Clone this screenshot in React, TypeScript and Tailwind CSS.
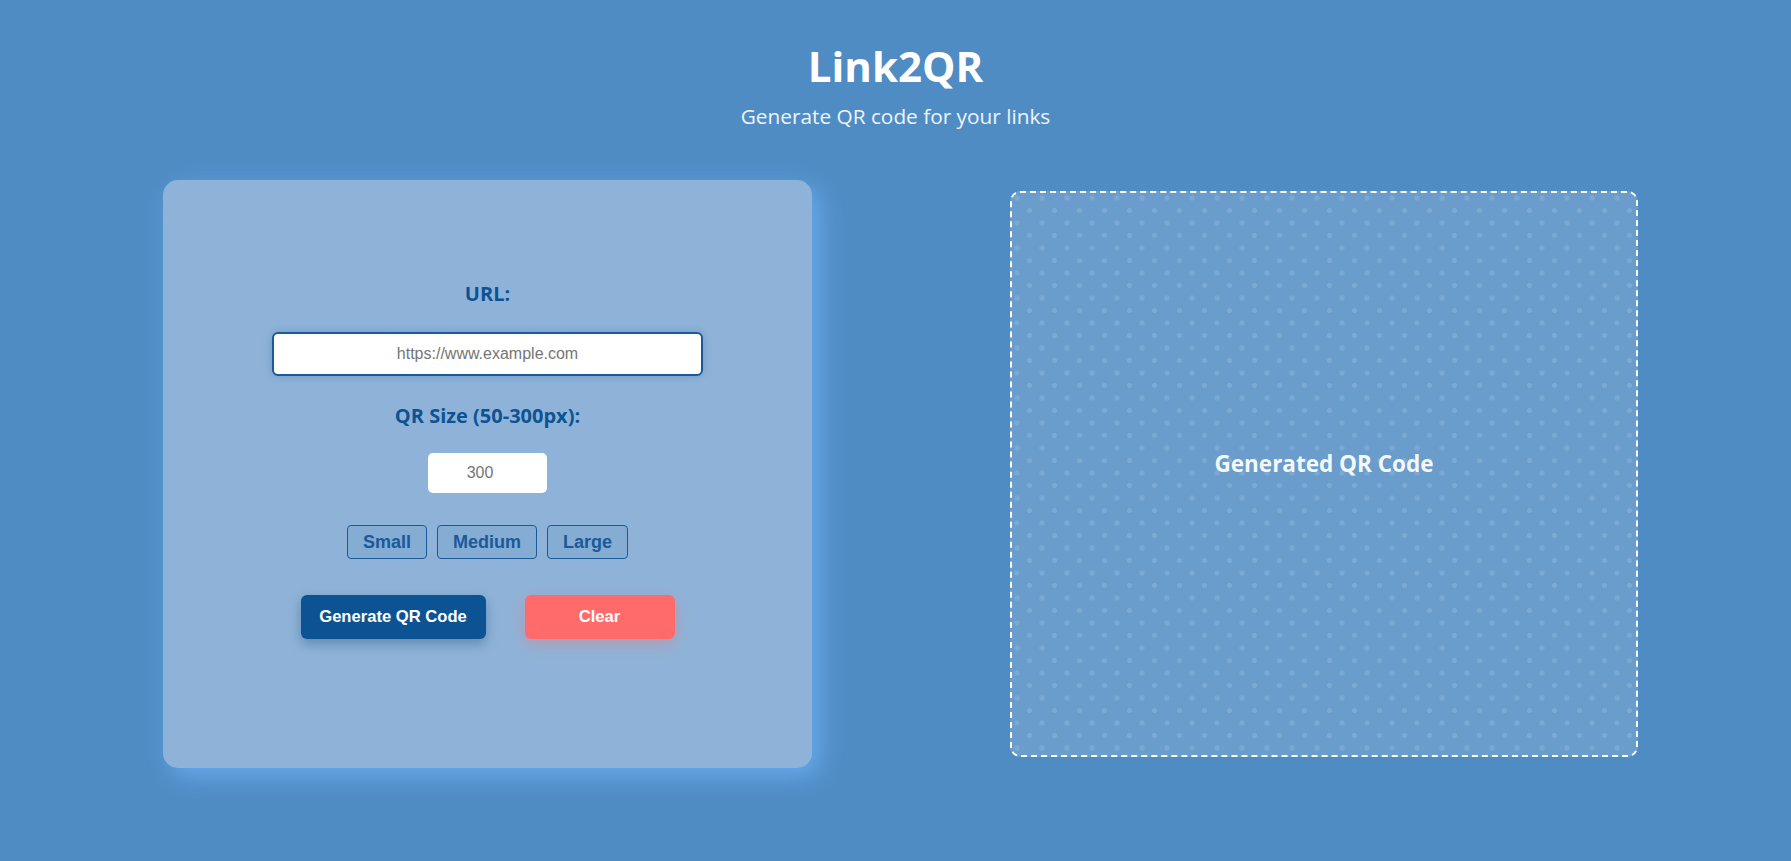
import { useState } from 'react';

const sizes = [
  { label: 'Small', value: 100 },
  { label: 'Medium', value: 200 },
  { label: 'Large', value: 300 },
];

export default function App() {
  const [url, setUrl] = useState('');
  const [size, setSize] = useState('');

  return (
    <div className="min-h-[861px] w-full bg-[#508cc4] font-['Open_Sans',sans-serif]">
      <header className="flex flex-col items-center pt-[41px]">
        <h1 className="text-[42px] leading-[50px] font-bold text-white">Link2QR</h1>
        <p className="mt-[11px] text-[20.8px] leading-[29px] text-white/90">Generate QR code for your links</p>
      </header>

      <main className="mt-[49px] flex items-center pl-[163px]">
        <section className="flex h-[588px] w-[649px] flex-col items-center rounded-[15px] bg-[#8fb3d8] pt-[100px] shadow-[8px_8px_24px_rgba(110,180,250,0.75)]">
          <label className="text-[20px] leading-[27px] font-bold text-[#0d5394]">URL:</label>
          <input
            type="text"
            value={url}
            onChange={e => setUrl(e.target.value)}
            placeholder="https://www.example.com"
            className="mt-[25px] h-[44px] w-[431px] rounded-[6px] border-2 border-[#1a5a9a] bg-white text-center font-['Liberation_Sans',sans-serif] text-[16px] text-[#333] placeholder:text-[#757575] shadow-[0_0_8px_rgba(13,83,148,0.25)] outline-none"
          />

          <label className="mt-[26px] text-[20px] leading-[27px] font-bold text-[#0d5394]">QR Size (50-300px):</label>
          <input
            type="number"
            value={size}
            onChange={e => setSize(e.target.value)}
            placeholder="300"
            className="mt-[24px] h-[40px] w-[119px] rounded-[5px] bg-white text-center font-['Liberation_Sans',sans-serif] text-[16px] text-[#333] placeholder:text-[#757575] outline-none"
          />

          <div className="mt-[32px] flex gap-[10px]">
            {sizes.map(s => (
              <button
                key={s.label}
                onClick={() => setSize(String(s.value))}
                className="h-[34px] rounded-[4px] border border-[#1a5a9a] bg-[rgba(13,83,148,0.07)] px-[15px] font-['Liberation_Sans',sans-serif] text-[18px] font-bold text-[#1a5a9a]"
              >
                {s.label}
              </button>
            ))}
          </div>

          <div className="mt-[36px] flex gap-[39px]">
            <button className="h-[44px] w-[185px] rounded-[6px] bg-[#0c5394] font-['Liberation_Sans',sans-serif] text-[16.6px] font-bold text-white shadow-[0_5px_12px_rgba(10,60,110,0.35)]">
              Generate QR Code
            </button>
            <button
              onClick={() => { setUrl(''); setSize(''); }}
              className="h-[44px] w-[150px] rounded-[6px] bg-[#ff6b6b] font-['Liberation_Sans',sans-serif] text-[16.6px] font-bold text-white shadow-[0_5px_15px_rgba(255,107,107,0.35)]"
            >
              Clear
            </button>
          </div>
        </section>

        <section className="ml-[198px] flex h-[566px] w-[628px] items-center justify-center rounded-[10px] border-2 border-dashed border-white bg-[#6a9dcc] bg-[radial-gradient(circle,rgba(255,255,255,0.12)_2.5px,transparent_2.5px),radial-gradient(circle,rgba(255,255,255,0.12)_2.5px,transparent_2.5px)] bg-size-[25px_25px] bg-position-[-7.5px_-7.5px,5px_5px] pb-[20px]">
          <p className="text-[22.5px] leading-[30px] font-bold text-white/95">Generated QR Code</p>
        </section>
      </main>
    </div>
  );
}
